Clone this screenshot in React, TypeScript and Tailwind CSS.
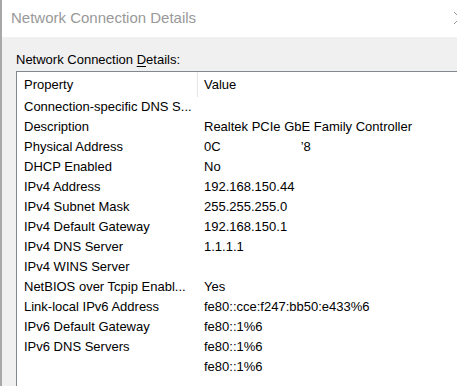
import React from "react";

const rows: [string, React.ReactNode][] = [
  ["Connection-specific DNS S...", ""],
  ["Description", "Realtek PCIe GbE Family Controller"],
  [
    "Physical Address",
    <span key="mac">
      0C<span className="ml-[80px]">’8</span>
    </span>,
  ],
  ["DHCP Enabled", "No"],
  ["IPv4 Address", "192.168.150.44"],
  ["IPv4 Subnet Mask", "255.255.255.0"],
  ["IPv4 Default Gateway", "192.168.150.1"],
  ["IPv4 DNS Server", "1.1.1.1"],
  ["IPv4 WINS Server", ""],
  ["NetBIOS over Tcpip Enabl...", "Yes"],
  ["Link-local IPv6 Address", "fe80::cce:f247:bb50:e433%6"],
  ["IPv6 Default Gateway", "fe80::1%6"],
  ["IPv6 DNS Servers", "fe80::1%6"],
  ["", "fe80::1%6"],
];

const App = () => {
  return (
    <div
      className="w-[457px] h-[386px] overflow-hidden flex flex-col border-l-2 border-[#a8a8a8] bg-[#f0f0f0] text-black"
      style={{ fontFamily: '"Liberation Sans", Arial, sans-serif' }}
    >
      {/* title bar */}
      <div className="h-[37px] shrink-0 bg-white flex items-center justify-between pl-[9px]">
        <span className="text-[15px] text-[#999999]">Network Connection Details</span>
        <svg width="3" height="12" viewBox="0 0 3 12" className="mb-[1px]">
          <path d="M0 0 L6 6 M0 12 L6 6" stroke="#9a9a9a" strokeWidth="1" fill="none" />
        </svg>
      </div>

      {/* body */}
      <div className="flex-1 flex flex-col pl-[14px] pt-[16px]">
        <div className="text-[13px] leading-[14px] h-[18px]">
          Network Connection <span className="underline underline-offset-2">D</span>etails:
        </div>
        <div className="flex-1 bg-white border-t border-l border-[#828790] text-[13px]">
          <div className="flex h-[25px] items-center">
            <div className="w-[180px] pl-[7px] flex items-center h-full">Property</div>
            <div className="w-px h-[25px] bg-[#e5e5e5]" />
            <div className="pl-[6px]">Value</div>
          </div>
          {rows.map(([k, v], i) => (
            <div key={i} className="flex h-[20px] items-center">
              <div className="w-[181px] pl-[7px] whitespace-nowrap overflow-hidden">{k}</div>
              <div className="pl-[6px] whitespace-nowrap">{v}</div>
            </div>
          ))}
        </div>
      </div>
    </div>
  );
};

export default App;
